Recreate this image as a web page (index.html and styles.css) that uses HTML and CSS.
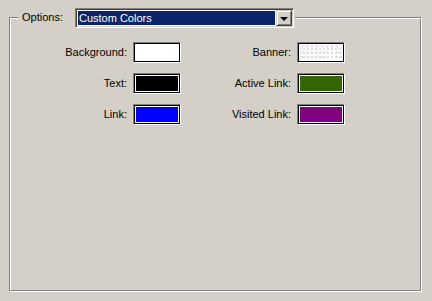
FILE: index.html
```html
<!DOCTYPE html>
<html>
<head>
<meta charset="utf-8">
<link rel="stylesheet" href="styles.css">
</head>
<body>
<div class="group">
  <div class="group-inner">
    <div class="legend">
      <span class="legend-label">Options:</span>
      <div class="select">
        <div class="select-field"><span class="select-value">Custom Colors</span></div>
        <div class="select-btn"><span class="arrow"></span></div>
      </div>
    </div>
    <div class="grid">
      <span class="label">Background:</span>
      <div class="swatch"><div class="fill fill-white"></div></div>
      <span class="label">Banner:</span>
      <div class="swatch"><div class="fill fill-banner"></div></div>

      <span class="label">Text:</span>
      <div class="swatch"><div class="fill fill-black"></div></div>
      <span class="label">Active Link:</span>
      <div class="swatch"><div class="fill fill-green"></div></div>

      <span class="label">Link:</span>
      <div class="swatch"><div class="fill fill-blue"></div></div>
      <span class="label">Visited Link:</span>
      <div class="swatch"><div class="fill fill-purple"></div></div>
    </div>
  </div>
</div>
</body>
</html>
```
FILE: styles.css
```css
html, body {
  margin: 0;
  padding: 0;
  background: #d4d0c8;
  font-family: "Liberation Sans", Arial, sans-serif;
  font-size: 11px;
  color: #000;
}
body {
  width: 432px;
  height: 301px;
  overflow: hidden;
  padding: 17px 0 0 9px;
  box-sizing: border-box;
}
.group {
  position: relative;
  width: 413px;
  height: 275px;
  box-sizing: border-box;
  border-top: 1px solid #808080;
  border-left: 1px solid #808080;
  border-right: 1px solid #fff;
  border-bottom: 1px solid #fff;
}
.group-inner {
  height: 100%;
  box-sizing: border-box;
  border-top: 1px solid #fff;
  border-left: 1px solid #fff;
  border-right: 1px solid #808080;
  border-bottom: 1px solid #808080;
  padding: 23px 0 0 4px;
}
.legend {
  position: absolute;
  top: -10px;
  left: 8px;
  display: flex;
  align-items: center;
  gap: 12px;
  background: #d4d0c8;
  padding: 0 1px 0 4px;
  height: 20px;
}
.legend-label {
  line-height: 13px;
  margin-top: -1px;
}
.select {
  width: 219px;
  height: 20px;
  box-sizing: border-box;
  border-top: 1px solid #808080;
  border-left: 1px solid #808080;
  border-right: 1px solid #fff;
  border-bottom: 1px solid #fff;
  display: flex;
  box-shadow: inset 1px 1px 0 #404040, inset -1px -1px 0 #d4d0c8;
  padding: 1px;
}
.select-field {
  flex: 1;
  background: #fff;
  padding: 1px;
  display: flex;
}
.select-value {
  flex: 1;
  background: #0a246a;
  color: #fff;
  line-height: 14px;
  padding-left: 1px;
}
.select-btn {
  width: 16px;
  height: 16px;
  box-sizing: border-box;
  background: #d4d0c8;
  border-top: 1px solid #d4d0c8;
  border-left: 1px solid #d4d0c8;
  border-right: 1px solid #404040;
  border-bottom: 1px solid #404040;
  box-shadow: inset 1px 1px 0 #fff, inset -1px -1px 0 #808080;
  display: flex;
  align-items: center;
  justify-content: center;
}
.arrow {
  width: 0;
  height: 0;
  border-left: 4px solid transparent;
  border-right: 4px solid transparent;
  border-top: 4px solid #000;
  margin-top: 1px;
}
.grid {
  display: grid;
  grid-template-columns: 112px 48px 104px 48px;
  grid-auto-rows: 21px;
  column-gap: 6px;
  row-gap: 10px;
  align-items: center;
}
.label {
  text-align: right;
  line-height: 13px;
}
.swatch {
  width: 48px;
  height: 21px;
  box-sizing: border-box;
  border-top: 1px solid #808080;
  border-left: 1px solid #808080;
  border-right: 1px solid #fff;
  border-bottom: 1px solid #fff;
}
.fill {
  height: 100%;
  box-sizing: border-box;
  border: 1px solid #000;
  box-shadow: inset 0 0 0 1px #fff;
}
.fill-white { background: #fff; }
.fill-black { background: #000; }
.fill-blue { background: #0000ff; }
.fill-green { background: #336600; }
.fill-purple { background: #800080; }
.fill-banner {
  background-color: #fbfbfb;
  background-image:
    radial-gradient(circle at 1px 1px, #dedede 0.7px, transparent 1px),
    radial-gradient(circle at 3px 3px, #e6e6e6 0.7px, transparent 1px);
  background-size: 4px 4px, 5px 5px;
}
```
